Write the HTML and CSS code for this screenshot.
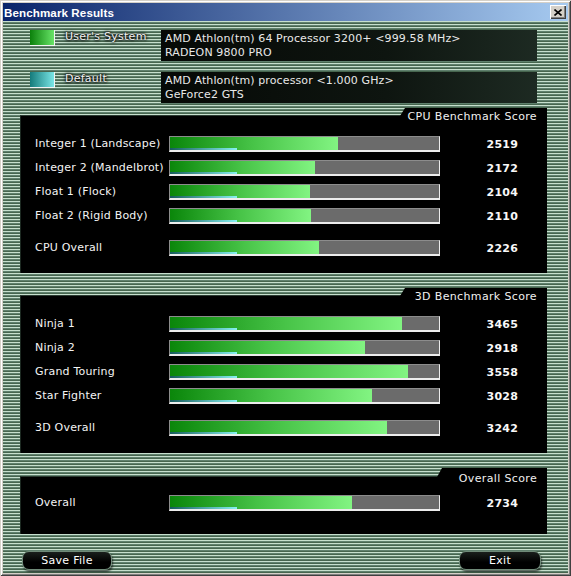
FILE: index.html
```html
<!DOCTYPE html>
<html lang="en">
<head>
  <meta charset="UTF-8" />
  <title>Benchmark Results</title>
  <link rel="stylesheet" href="styles.css">
</head>
<body>
  <div class="window">
    <!-- title bar -->
    <div class="titlebar">
      <span class="title">Benchmark Results</span>
      <span class="close" aria-label="Close">
        <svg width="8" height="7" viewBox="0 0 8 7"><path d="M0.5 0.5 L7.5 6.5 M7.5 0.5 L0.5 6.5" stroke="#000" stroke-width="1.6"/></svg>
      </span>
    </div>

    <div class="content">
      <!-- systems -->
      <div class="sys-row">
        <span class="swatch user"></span>
        <span class="sys-label">User's System</span>
        <div class="sys-info">
          <div>AMD Athlon(tm) 64 Processor 3200+ &lt;999.58 MHz&gt;</div>
          <div>RADEON 9800 PRO</div>
        </div>
      </div>
      <div class="sys-row">
        <span class="swatch default"></span>
        <span class="sys-label">Default</span>
        <div class="sys-info">
          <div>AMD Athlon(tm) processor &lt;1.000 GHz&gt;</div>
          <div>GeForce2 GTS</div>
        </div>
      </div>

      <!-- CPU -->
      <section class="panel">
        <div class="panel-title">CPU Benchmark Score</div>
        <div class="rows">
          <div class="row"><span class="label">Integer 1 (Landscape)</span><div class="bar"><div class="fill" style="width:62.5%"></div></div><span class="score">2519</span></div>
          <div class="row"><span class="label">Integer 2 (Mandelbrot)</span><div class="bar"><div class="fill" style="width:53.9%"></div></div><span class="score">2172</span></div>
          <div class="row"><span class="label">Float 1 (Flock)</span><div class="bar"><div class="fill" style="width:52%"></div></div><span class="score">2104</span></div>
          <div class="row"><span class="label">Float 2 (Rigid Body)</span><div class="bar"><div class="fill" style="width:52.4%"></div></div><span class="score">2110</span></div>
          <div class="row total"><span class="label">CPU Overall</span><div class="bar"><div class="fill" style="width:55.4%"></div></div><span class="score">2226</span></div>
        </div>
      </section>

      <!-- 3D -->
      <section class="panel">
        <div class="panel-title">3D Benchmark Score</div>
        <div class="rows">
          <div class="row"><span class="label">Ninja 1</span><div class="bar"><div class="fill" style="width:86.2%"></div></div><span class="score">3465</span></div>
          <div class="row"><span class="label">Ninja 2</span><div class="bar"><div class="fill" style="width:72.5%"></div></div><span class="score">2918</span></div>
          <div class="row"><span class="label">Grand Touring</span><div class="bar"><div class="fill" style="width:88.5%"></div></div><span class="score">3558</span></div>
          <div class="row"><span class="label">Star Fighter</span><div class="bar"><div class="fill" style="width:75.1%"></div></div><span class="score">3028</span></div>
          <div class="row total"><span class="label">3D Overall</span><div class="bar"><div class="fill" style="width:80.7%"></div></div><span class="score">3242</span></div>
        </div>
      </section>

      <!-- overall -->
      <section class="panel overall">
        <div class="panel-title">Overall Score</div>
        <div class="rows">
          <div class="row"><span class="label">Overall</span><div class="bar"><div class="fill" style="width:67.7%"></div></div><span class="score">2734</span></div>
        </div>
      </section>

      <div class="buttons">
        <button class="btn save">Save File</button>
        <button class="btn exit">Exit</button>
      </div>
    </div>
  </div>
</body>
</html>
```

FILE: styles.css
```css
/* ─── reset ─────────────────────────── */
*,*::before,*::after{box-sizing:border-box;margin:0;padding:0}
html,body{width:571px;height:576px;overflow:hidden;background:#d4d0c8}
body{font-family:"DejaVu Sans",Verdana,sans-serif;font-size:11px;color:#fff}

/* ─── window frame ──────────────────── */
.window{
  width:571px;height:576px;padding:3px;background:#d4d0c8;
  box-shadow:inset 1px 1px #d4d0c8,inset -1px -1px #404040,
             inset 2px 2px #fff,inset -2px -2px #808080;
}
.titlebar{
  height:18px;display:flex;align-items:center;justify-content:space-between;
  padding:0 2px 0 1px;
  background:linear-gradient(90deg,#0a246a,#a6caf0);
}
.title{font:bold 11.6px "Liberation Sans",Arial,sans-serif;color:#fff;letter-spacing:.1px}
.close{
  width:16px;height:14px;display:flex;align-items:center;justify-content:center;
  background:#d4d0c8;
  box-shadow:inset 1px 1px #fff,inset -1px -1px #404040,inset -2px -2px #808080;
}

/* ─── striped body ──────────────────── */
.content{
  height:552px;padding:9px 21px 0 17px;
  background:repeating-linear-gradient(180deg,#c6dfcd 0 1px,#5f806d 1px 2px,#47664f 2px 3px);
}

/* ─── systems ───────────────────────── */
.sys-row{display:flex;height:31px}
.sys-row + .sys-row{margin-top:11px}
.swatch{
  width:25px;height:16px;margin-left:10px;
  border-right:1px solid #f4f4f4;border-bottom:1px solid #f4f4f4;
}
.swatch.user{background:linear-gradient(90deg,#0b800b,#68e468)}
.swatch.default{background:linear-gradient(90deg,#157b7b,#7ae6e6)}
.sys-label{
  width:96px;margin-left:10px;line-height:14px;color:#f2f2f2;letter-spacing:.25px;
  text-shadow:0 0 2px #000,0 0 3px #000,0 0 4px #000;
}
.sys-info{
  width:376px;padding:2px 4px;line-height:14px;color:#e8e8e8;letter-spacing:.12px;
  background:linear-gradient(90deg,#060906,#0e1510 60%,#1d2a22);
}

/* ─── score panels ──────────────────── */
.panel{
  position:relative;height:158px;margin-top:22px;background:#000;
  border-left:1px solid #1d2a22;border-top:1px solid #2a3a30;
}
.sys-row + .panel{margin-top:12px}
.panel::before{
  content:"";position:absolute;top:-8px;right:0;width:147px;height:8px;
  background:#000;clip-path:polygon(5px 0,100% 0,100% 100%,0 100%);
}
.panel-title{
  position:relative;height:16px;margin-top:-7px;padding-right:10px;
  line-height:16px;text-align:right;color:#f0f0f0;letter-spacing:.35px;
}
.rows{margin-top:7px;padding-left:14px}
.row{
  display:grid;grid-template-columns:134px 271px 78px;align-items:center;height:24px;
}
.row.total{margin-top:8px}
.label{color:#f4f4f4;margin-top:-2px;letter-spacing:.2px;white-space:nowrap}
.score{font-weight:bold;text-align:right;color:#f8f8f8;letter-spacing:.2px}

.bar{
  height:16px;background:#6b6b6b;position:relative;
  border-top:1px solid #8c8c8c;border-left:1px solid #8c8c8c;
  border-right:1px solid #ececec;border-bottom:2px solid #ececec;
}
.fill{height:100%;background:linear-gradient(90deg,#0a860a,#48c448 50%,#82f482)}
.bar::after{
  content:"";position:absolute;left:0;bottom:0;width:67px;height:2px;
  background:linear-gradient(90deg,#175c5c,#86f0f0);
}

.panel.overall{height:58px;margin-top:23px}
.panel.overall::before{width:110px;top:-9px;height:9px}
.panel.overall .panel-title{margin-top:-6px}
.panel.overall .rows{margin-top:4px}

/* ─── buttons ───────────────────────── */
.buttons{display:flex;justify-content:space-between;margin-top:17px;padding:0 6px 0 2px}
.btn{
  height:19px;border:1px solid #6f8a78;border-radius:7px;
  background:linear-gradient(180deg,#1a1f1c,#000 60%);
  color:#fff;font:11px "DejaVu Sans",Verdana,sans-serif;letter-spacing:.3px;
  box-shadow:1px 2px 2px rgba(0,0,0,.55);cursor:pointer;
}
.btn.save{width:90px}
.btn.exit{width:82px}
```
